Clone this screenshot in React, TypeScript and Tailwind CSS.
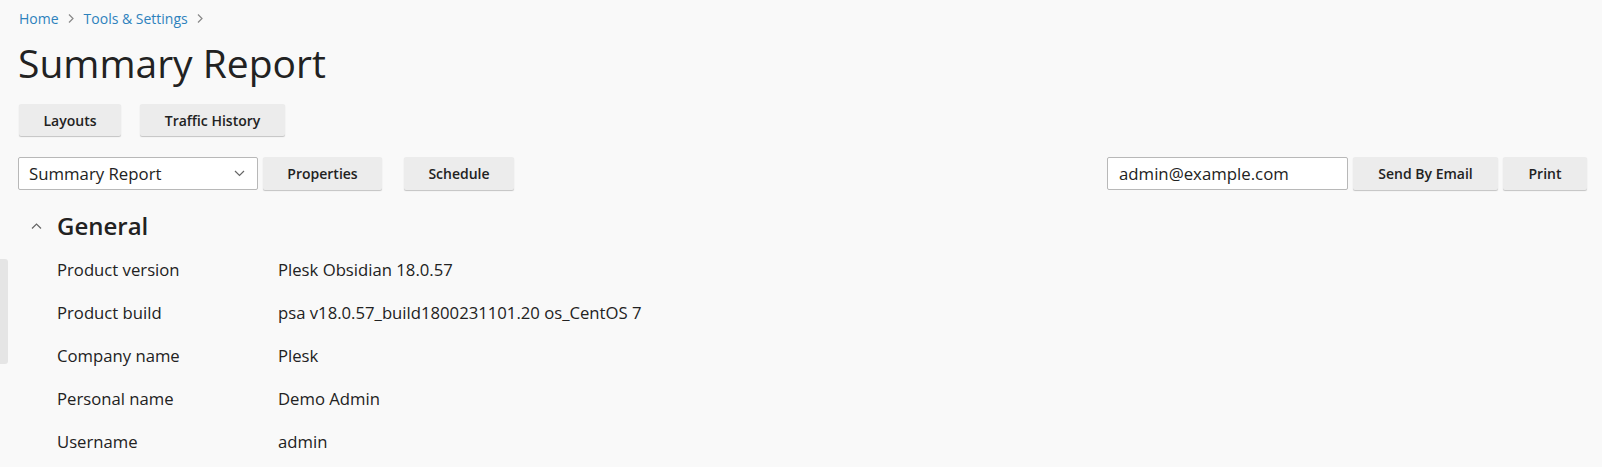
import React from "react";

const Chevron = ({ dir, className }: { dir: "right" | "down" | "up"; className?: string }) => {
  const d =
    dir === "right" ? "M3 1.5 L7 5.5 L3 9.5" : dir === "down" ? "M1 3 L5.5 7.5 L10 3" : "M1 7.5 L5.5 3 L10 7.5";
  return (
    <svg width="11" height="11" viewBox="0 0 11 11" className={className}>
      <path d={d} fill="none" stroke="currentColor" strokeWidth="1.2" />
    </svg>
  );
};

const Btn = ({ children, w }: { children: React.ReactNode; w: string }) => (
  <button
    className={`${w} h-full bg-[#ececec] rounded-[2px] shadow-[0_1px_1px_rgba(0,0,0,0.22)] text-[14px] font-semibold text-[#222] flex items-center justify-center`}
  >
    {children}
  </button>
);

const rows: [string, string][] = [
  ["Product version", "Plesk Obsidian 18.0.57"],
  ["Product build", "psa v18.0.57_build1800231101.20 os_CentOS 7"],
  ["Company name", "Plesk"],
  ["Personal name", "Demo Admin"],
  ["Username", "admin"],
];

export default function App() {
  return (
    <div className="relative min-h-[467px] w-full bg-[#f9f9f9] font-['Open_Sans',sans-serif] text-[#222] overflow-hidden">
      <div className="absolute left-0 top-[259px] w-[8px] h-[105px] bg-[#e5e5e5] rounded-r-[3px]" />
      <div className="pl-[19px] pr-[15px] pt-[8px]">
        <div className="h-[20px] flex items-center text-[14px] text-[#2e82bd]">
          <span>Home</span>
          <Chevron dir="right" className="mx-[7px] text-[#888]" />
          <span>Tools &amp; Settings</span>
          <Chevron dir="right" className="mx-[7px] text-[#888]" />
        </div>
        <h1 className="text-[39px] leading-[50px] font-normal text-[#222] mt-[10px] -ml-[1px]">Summary Report</h1>
        <div className="mt-[16px] h-[32px] flex gap-[19px]">
          <Btn w="w-[102px]">Layouts</Btn>
          <Btn w="w-[145px]">Traffic History</Btn>
        </div>
        <div className="mt-[21px] h-[33px] flex items-stretch">
          <div className="w-[240px] -ml-[1px] bg-white border border-[#b8b8b8] rounded-[2px] flex items-center justify-between pl-[10px] pr-[12px] text-[16.8px]">
            <span>Summary Report</span>
            <Chevron dir="down" className="text-[#666]" />
          </div>
          <div className="ml-[5px] flex">
            <Btn w="w-[119px]">Properties</Btn>
          </div>
          <div className="ml-[22px] flex">
            <Btn w="w-[110px]">Schedule</Btn>
          </div>
          <div className="flex-1" />
          <div className="w-[241px] bg-white border border-[#b8b8b8] rounded-[2px] flex items-center pl-[11px] text-[16.8px]">
            admin@example.com
          </div>
          <div className="ml-[5px] flex">
            <Btn w="w-[145px]">Send By Email</Btn>
          </div>
          <div className="ml-[5px] flex">
            <Btn w="w-[84px]">Print</Btn>
          </div>
        </div>
        <div className="mt-[19px] h-[34px] flex items-center">
          <Chevron dir="up" className="ml-[12px] text-[#666]" />
          <h2 className="ml-[15px] text-[24px] font-semibold text-[#222]">General</h2>
        </div>
        <div className="ml-[38px] mt-[5px]">
          {rows.map(([k, v]) => (
            <div key={k} className="h-[43px] flex items-center text-[16.7px] text-[#222]">
              <span className="w-[221px]">{k}</span>
              <span>{v}</span>
            </div>
          ))}
        </div>
      </div>
    </div>
  );
}
